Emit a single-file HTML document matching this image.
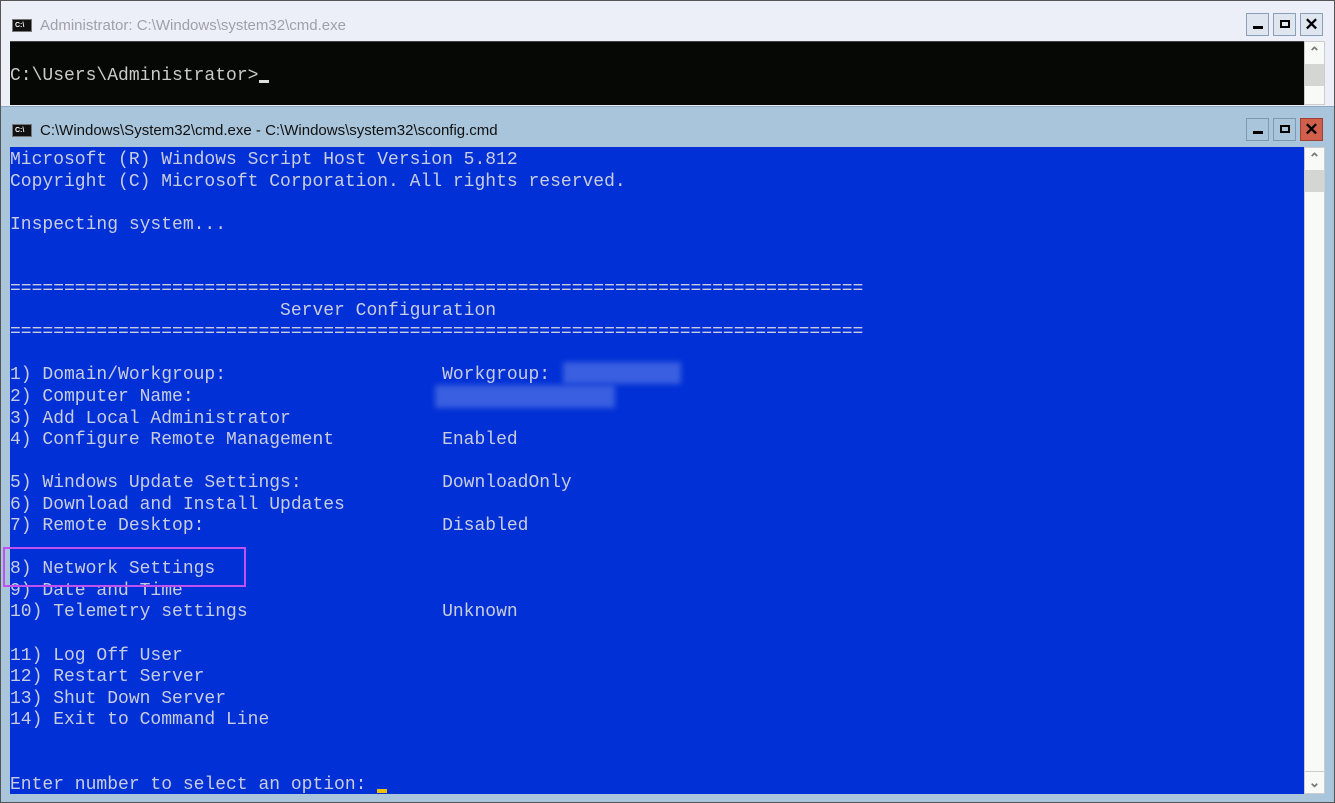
<!DOCTYPE html>
<html><head><meta charset="utf-8"><style>
*{margin:0;padding:0;box-sizing:border-box}
body{width:1335px;height:803px;overflow:hidden;background:#a9c5dc;position:relative;font-family:"Liberation Sans",sans-serif}
.frame{position:absolute;left:0;top:0;width:1335px;height:803px;border:1px solid #555;pointer-events:none}
.w1{position:absolute;left:1px;top:1px;width:1333px;height:105px;background:#eceef8}
.t{position:absolute;font-size:15px;white-space:nowrap}
.ico{position:absolute;width:20px;height:13px;background:#111;border:1px solid #777;color:#fff;font:bold 7px "Liberation Sans";line-height:11px;padding-left:2px}
.btn{position:absolute;width:23px;height:23px;border:1px solid #8aa0b8;background:#dfe6f0}
.con1{position:absolute;left:10px;top:41px;width:1294px;height:64px;background:#050805;border-top:1px solid #444}
.con2{position:absolute;left:10px;top:147px;width:1294px;height:647px;background:#0030d6}
.sb{position:absolute;left:1304px;width:21px;background:#f8faf8;border:1px solid #ccc}
.ar{position:absolute;left:0;width:19px;height:20px;text-align:center;color:#777;font:bold 14px "Liberation Sans";line-height:20px}
pre{position:absolute;font-family:"Liberation Mono",monospace;font-size:18px;line-height:21.55px;color:#c9cde0;white-space:pre}
.blur{position:absolute;background:#3a5fe0;filter:blur(3px)}
</style></head><body>
<div class="w1"></div>
<div class="ico" style="left:12px;top:19px">C:\</div>
<div class="t" style="left:40px;top:17px;color:#a0a0a8">Administrator: C:\Windows\system32\cmd.exe</div>
<div class="btn" style="left:1246px;top:13px"><div style="position:absolute;left:6px;top:12px;width:10px;height:3px;background:#000"></div></div>
<div class="btn" style="left:1273px;top:13px"><div style="position:absolute;left:6px;top:6px;width:10px;height:8px;border:2px solid #000"></div></div>
<div class="btn" style="left:1300px;top:13px;text-align:center;font:bold 17px 'Liberation Sans';line-height:21px">✕</div>
<div class="con1"></div>
<pre style="left:10px;top:66px;color:#c8ccc8">C:\Users\Administrator&gt;</pre>
<div style="position:absolute;left:259px;top:80px;width:10px;height:3px;background:#ddd"></div>
<div class="sb" style="top:41px;height:64px"><div class="ar" style="top:0">⌃</div><div style="position:absolute;top:22px;left:0;width:19px;height:22px;background:#d4d6d4"></div></div>

<div style="position:absolute;left:1px;top:106px;width:1333px;height:1px;background:#8fa8c0"></div>
<div class="ico" style="left:12px;top:124px">C:\</div>
<div class="t" style="left:40px;top:122px;color:#111">C:\Windows\System32\cmd.exe - C:\Windows\system32\sconfig.cmd</div>
<div class="btn" style="left:1246px;top:118px;background:#a9c5dc;border-color:#7d98b0"><div style="position:absolute;left:6px;top:12px;width:10px;height:3px;background:#000"></div></div>
<div class="btn" style="left:1273px;top:118px;background:#a9c5dc;border-color:#7d98b0"><div style="position:absolute;left:6px;top:6px;width:10px;height:8px;border:2px solid #000"></div></div>
<div class="btn" style="left:1300px;top:118px;background:#d0604c;border-color:#a04030;text-align:center;font:bold 17px 'Liberation Sans';line-height:21px">✕</div>
<div class="con2"></div>
<div class="sb" style="top:147px;height:647px"><div class="ar" style="top:0">⌃</div><div style="position:absolute;top:22px;left:0;width:19px;height:22px;background:#d4d6d4"></div><div class="ar" style="bottom:0;border-top:1px solid #ccc;height:22px">⌄</div></div>
<div class="blur" style="left:563px;top:362px;width:118px;height:22px"></div>
<div class="blur" style="left:435px;top:385px;width:180px;height:23px"></div>
<pre style="left:10px;top:150px">Microsoft (R) Windows Script Host Version 5.812
Copyright (C) Microsoft Corporation. All rights reserved.

Inspecting system...


===============================================================================
                         Server Configuration
===============================================================================

1) Domain/Workgroup:                    Workgroup:
2) Computer Name:
3) Add Local Administrator
4) Configure Remote Management          Enabled

5) Windows Update Settings:             DownloadOnly
6) Download and Install Updates
7) Remote Desktop:                      Disabled

8) Network Settings
9) Date and Time
10) Telemetry settings                  Unknown

11) Log Off User
12) Restart Server
13) Shut Down Server
14) Exit to Command Line


Enter number to select an option: </pre>
<div style="position:absolute;left:377px;top:789px;width:10px;height:4px;background:#f0c000"></div>
<div style="position:absolute;left:3px;top:547px;width:243px;height:40px;border:2px solid #c050f0"></div>
<div class="frame"></div>
</body></html>
